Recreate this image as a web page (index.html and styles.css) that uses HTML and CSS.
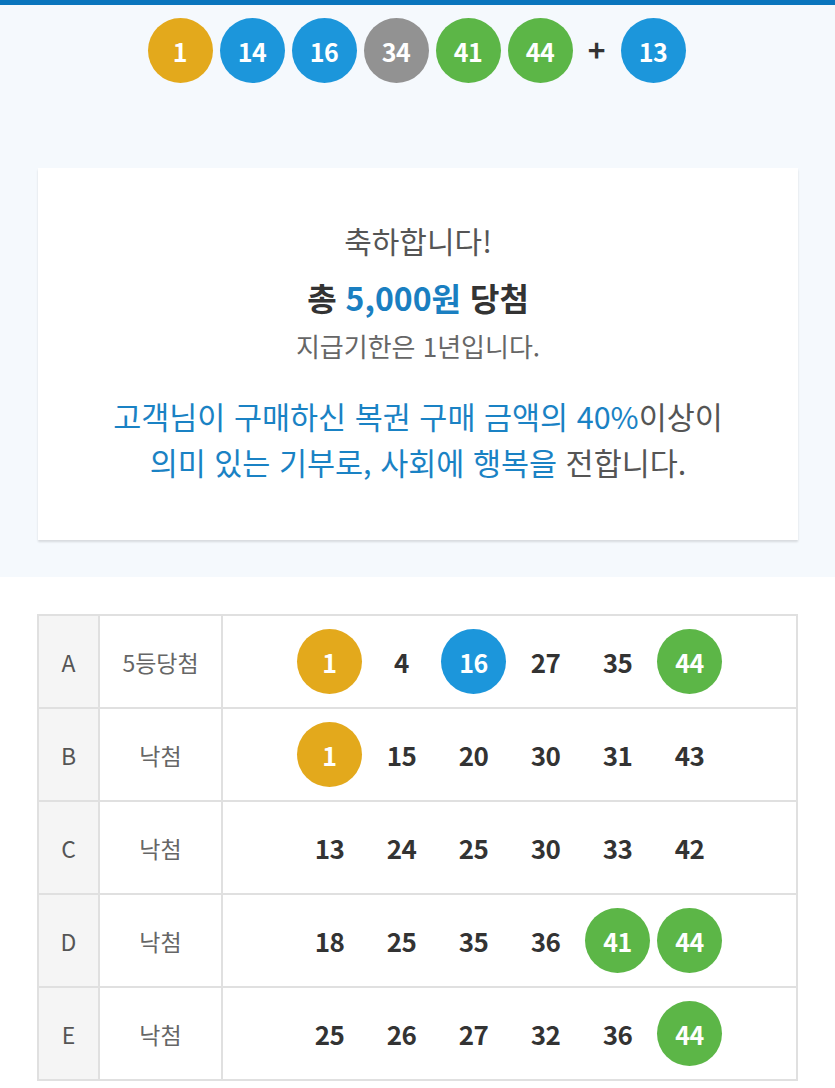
FILE: index.html
```html
<!DOCTYPE html>
<html lang="ko">
<head>
<meta charset="utf-8">
<link rel="stylesheet" href="styles.css">
</head>
<body>
<div class="topbar"></div>
<section class="hero">
  <div class="draw">
    <span class="ball y">1</span>
    <span class="ball b">14</span>
    <span class="ball b">16</span>
    <span class="ball g">34</span>
    <span class="ball gr">41</span>
    <span class="ball gr">44</span>
    <span class="plus">+</span>
    <span class="ball b">13</span>
  </div>
  <div class="card">
    <p class="congrats">축하합니다!</p>
    <p class="total">총 <span class="amt">5,000원</span> 당첨</p>
    <p class="deadline">지급기한은 1년입니다.</p>
    <p class="msg"><span class="blue">고객님이 구매하신 복권 구매 금액의 40%</span>이상이<br><span class="blue">의미 있는 기부로, 사회에 행복을</span> 전합니다.</p>
  </div>
</section>
<section class="results">
  <table class="tbl">
    <tr>
      <td class="lbl">A</td><td class="res">5등당첨</td>
      <td class="nums"><div class="row"><span class="ball y">1</span><span class="n">4</span><span class="ball b">16</span><span class="n">27</span><span class="n">35</span><span class="ball gr">44</span></div></td>
    </tr>
    <tr>
      <td class="lbl">B</td><td class="res">낙첨</td>
      <td class="nums"><div class="row"><span class="ball y">1</span><span class="n">15</span><span class="n">20</span><span class="n">30</span><span class="n">31</span><span class="n">43</span></div></td>
    </tr>
    <tr>
      <td class="lbl">C</td><td class="res">낙첨</td>
      <td class="nums"><div class="row"><span class="n">13</span><span class="n">24</span><span class="n">25</span><span class="n">30</span><span class="n">33</span><span class="n">42</span></div></td>
    </tr>
    <tr>
      <td class="lbl">D</td><td class="res">낙첨</td>
      <td class="nums"><div class="row"><span class="n">18</span><span class="n">25</span><span class="n">35</span><span class="n">36</span><span class="ball gr">41</span><span class="ball gr">44</span></div></td>
    </tr>
    <tr>
      <td class="lbl">E</td><td class="res">낙첨</td>
      <td class="nums"><div class="row"><span class="n">25</span><span class="n">26</span><span class="n">27</span><span class="n">32</span><span class="n">36</span><span class="ball gr">44</span></div></td>
    </tr>
  </table>
</section>
</body>
</html>
```

FILE: styles.css
```css
* { box-sizing: border-box; }
html, body { margin: 0; padding: 0; }
body {
  width: 835px;
  background: #fff;
  font-family: "Noto Sans CJK KR", "Noto Sans", sans-serif;
  color: #333;
}
.topbar { height: 5px; background: #0a75bd; }
.hero {
  background: #f5f9fd;
  padding: 13px 37px 37px 38px;
}
.draw {
  display: flex;
  justify-content: center;
  align-items: center;
  gap: 7px;
  height: 65px;
  margin-left: -3px;
}
.ball {
  width: 65px;
  height: 65px;
  border-radius: 50%;
  display: flex;
  align-items: center;
  justify-content: center;
  color: #fff;
  font-weight: 700;
  font-size: 25px;
  letter-spacing: -0.5px;
  flex: none;
}
.ball.y { background: #e3a91c; }
.ball.b { background: #1c96db; }
.ball.g { background: #929292; }
.ball.gr { background: #5cb647; }
.plus {
  font-size: 30px;
  font-weight: 700;
  color: #333;
  width: 34px;
  text-align: center;
  line-height: 1;
  margin-top: -4px;
}
.card {
  margin-top: 85px;
  background: #fff;
  box-shadow: 0 2px 2px rgba(0,0,0,0.12);
  text-align: center;
  padding: 52px 0 55px;
}
.card p { margin: 0; }
.congrats { font-size: 30px; line-height: 40px; color: #555; }
.total { font-size: 32px; line-height: 40px; font-weight: 700; color: #333; margin-top: 17px !important; }
.amt { color: #1a7fc1; }
.deadline { font-size: 26px; line-height: 36px; color: #666; margin-top: 11px !important; }
.msg { font-size: 30.5px; line-height: 46px; color: #555; margin-top: 29px !important; }
.blue { color: #1a82c4; }
.results { padding: 37px 37px 0 37px; }
.tbl {
  width: 761px;
  border-collapse: collapse;
  border: 2px solid #e0e0e0;
}
.tbl td {
  border: 2px solid #e0e0e0;
  height: 93px;
  padding: 0;
  text-align: center;
  vertical-align: middle;
}
.lbl { width: 61px; background: #f5f5f5; font-size: 23px; color: #555; }
.res { width: 123px; font-size: 23px; color: #666; }
.row {
  display: flex;
  justify-content: center;
  gap: 7px;
}
.n {
  width: 65px;
  height: 65px;
  display: flex;
  align-items: center;
  justify-content: center;
  font-weight: 700;
  font-size: 26px;
  color: #333;
  letter-spacing: -0.5px;
}
```
